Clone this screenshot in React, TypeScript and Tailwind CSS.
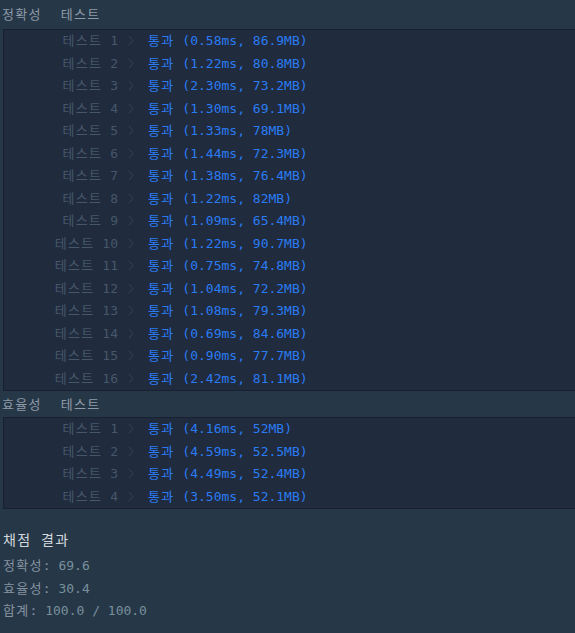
const accuracy = [
  ["0.58ms", "86.9MB"],
  ["1.22ms", "80.8MB"],
  ["2.30ms", "73.2MB"],
  ["1.30ms", "69.1MB"],
  ["1.33ms", "78MB"],
  ["1.44ms", "72.3MB"],
  ["1.38ms", "76.4MB"],
  ["1.22ms", "82MB"],
  ["1.09ms", "65.4MB"],
  ["1.22ms", "90.7MB"],
  ["0.75ms", "74.8MB"],
  ["1.04ms", "72.2MB"],
  ["1.08ms", "79.3MB"],
  ["0.69ms", "84.6MB"],
  ["0.90ms", "77.7MB"],
  ["2.42ms", "81.1MB"],
];

const efficiency = [
  ["4.16ms", "52MB"],
  ["4.59ms", "52.5MB"],
  ["4.49ms", "52.4MB"],
  ["3.50ms", "52.1MB"],
];

const font = { fontFamily: '"DejaVu Sans Mono", "Noto Sans CJK KR", monospace' };

const Ko = ({ children }: { children: string }) => (
  <span className="tracking-[1.3px]">{children}</span>
);

const Chevron = () => (
  <svg width="6" height="11" viewBox="0 0 6 11" className="ml-[10px] shrink-0">
    <polyline points="0.8,0.8 5,5.5 0.8,10.2" fill="none" stroke="#34445a" strokeWidth="1" />
  </svg>
);

const ResultTable = ({ rows }: { rows: string[][] }) => (
  <div className="ml-[3px] bg-[#202b3d] border-t border-l border-b border-[#172130]">
    {rows.map(([time, mem], i) => (
      <div key={i} className="flex items-center h-[22.5px] pb-[1px]">
        <div className="w-[114px] text-right text-[#46576a] whitespace-pre">
          <Ko>테스트</Ko> {i + 1}
        </div>
        <Chevron />
        <div className="ml-[14px] text-[#2b7cf4] whitespace-pre">
          <Ko>통과</Ko> ({time}, {mem})
        </div>
      </div>
    ))}
  </div>
);

const App = () => {
  return (
    <div
      className="w-[575px] h-[633px] bg-[#263747] text-[13px] leading-none overflow-hidden"
      style={font}
    >
      <div className="h-[29px] flex items-center pl-[2px] text-[#8e9aa7]">
        <Ko>정확성</Ko>
        <span className="ml-[19px]">
          <Ko>테스트</Ko>
        </span>
      </div>
      <ResultTable rows={accuracy} />
      <div className="h-[26px] flex items-center pl-[2px] text-[#8e9aa7]">
        <Ko>효율성</Ko>
        <span className="ml-[19px]">
          <Ko>테스트</Ko>
        </span>
      </div>
      <ResultTable rows={efficiency} />
      <div className="pl-[3px] pt-[23px]">
        <div className="text-[14px] text-[#d3d8de] h-[16px] flex items-center">
          <Ko>채점 결과</Ko>
        </div>
        <div className="mt-[11px] flex flex-col gap-[9.5px] text-[#8593a2]">
          <div className="h-[13px] whitespace-pre">
            <Ko>정확성</Ko>: <span className="text-[#78909c]">69.6</span>
          </div>
          <div className="h-[13px] whitespace-pre">
            <Ko>효율성</Ko>: <span className="text-[#78909c]">30.4</span>
          </div>
          <div className="h-[13px] whitespace-pre">
            <Ko>합계</Ko>: <span className="text-[#78909c]">100.0 / 100.0</span>
          </div>
        </div>
      </div>
    </div>
  );
};

export default App;
